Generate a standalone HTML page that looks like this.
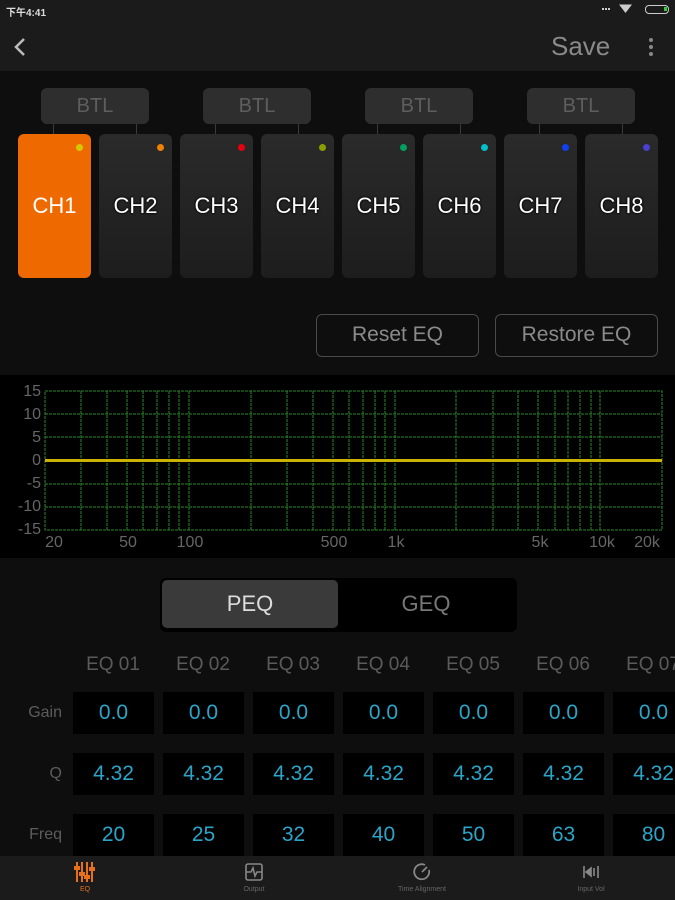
<!DOCTYPE html>
<html><head><meta charset="utf-8"><style>
*{margin:0;padding:0;box-sizing:border-box}
body{width:675px;height:900px;background:#0e0e0e;font-family:"Liberation Sans","Noto Sans CJK SC",sans-serif;position:relative;overflow:hidden;color:#fff}
.a{position:absolute}
.hdr{left:0;top:0;width:675px;height:71px;background:#1b1b1b}
.btl{width:108px;height:36px;background:#2e2e2e;border-radius:6px;color:#5e5e5e;font-size:20px;text-align:center;line-height:36px}
.con{width:1px;height:10px;background:#3a3a3a}
.ch{width:73px;height:144px;border-radius:6px;background:linear-gradient(#2a2a2a,#1d1d1d);font-size:22px;text-align:center;line-height:144px;color:#fff;text-shadow:0 0 2px #000,0 0 2px #000}
.dot{width:7px;height:7px;border-radius:50%;top:10px;right:8px}
.btn{height:43px;width:163px;border:1.5px solid #4a4a4a;border-radius:6px;color:#8a8a8a;font-size:21px;text-align:center;line-height:40px}
.eqh{width:80px;text-align:center;color:#5a5a5a;font-size:19px}
.cell{width:81px;height:42px;background:#000;color:#2aa5c8;font-size:21px;text-align:center;line-height:42px}
.lbl{width:62px;text-align:right;color:#5c5c5c;font-size:16px}
.nav{left:0;top:856px;width:675px;height:44px;background:#1b1b1b}
.nl{font-size:7px;color:#666;text-align:center;width:100px}
</style></head><body>
<div class="a hdr"></div>
<div class="a" style="left:6px;top:4px;font-size:10px;color:#ddd;font-weight:bold">下午4:41</div>
<div class="a" style="left:602px;top:8px;width:8px;height:3px;border-top:2px dotted #ccc"></div>
<div class="a" style="left:619px;top:3px;width:13px;height:10px;background:#ccc;clip-path:polygon(0 15%,100% 15%,50% 100%)"></div>
<div class="a" style="left:645px;top:5px;width:24px;height:9px;border:1.5px solid #ccc;border-radius:4px"><div style="position:absolute;right:1px;top:1px;width:3px;height:4px;background:#3c3"></div></div>
<svg class="a" style="left:12px;top:36px" width="16" height="22"><path d="M12 3 L4 11 L12 19" stroke="#bbb" stroke-width="2.5" fill="none"/></svg>
<div class="a" style="left:551px;top:31px;font-size:26px;color:#8a8a8a">Save</div>
<div class="a" style="left:649px;top:38px;width:4px;height:4px;border-radius:50%;background:#888;box-shadow:0 7px #888,0 14px #888"></div>

<div class="a btl" style="left:41px;top:88px">BTL</div>
<div class="a btl" style="left:203px;top:88px">BTL</div>
<div class="a btl" style="left:365px;top:88px">BTL</div>
<div class="a btl" style="left:527px;top:88px">BTL</div>
<div class="a con" style="left:53px;top:124px"></div><div class="a con" style="left:136px;top:124px"></div>
<div class="a con" style="left:215px;top:124px"></div><div class="a con" style="left:298px;top:124px"></div>
<div class="a con" style="left:377px;top:124px"></div><div class="a con" style="left:460px;top:124px"></div>
<div class="a con" style="left:539px;top:124px"></div><div class="a con" style="left:622px;top:124px"></div>

<div class="a ch" style="left:18px;top:134px;background:#ee6a00;text-shadow:none">CH1<div class="a dot" style="background:#d4c800"></div></div>
<div class="a ch" style="left:99px;top:134px">CH2<div class="a dot" style="background:#f08000"></div></div>
<div class="a ch" style="left:180px;top:134px">CH3<div class="a dot" style="background:#e80010"></div></div>
<div class="a ch" style="left:261px;top:134px">CH4<div class="a dot" style="background:#8aa000"></div></div>
<div class="a ch" style="left:342px;top:134px">CH5<div class="a dot" style="background:#00a060"></div></div>
<div class="a ch" style="left:423px;top:134px">CH6<div class="a dot" style="background:#00c0c8"></div></div>
<div class="a ch" style="left:504px;top:134px">CH7<div class="a dot" style="background:#1040f0"></div></div>
<div class="a ch" style="left:585px;top:134px">CH8<div class="a dot" style="background:#4a40d0"></div></div>

<div class="a btn" style="left:316px;top:314px">Reset EQ</div>
<div class="a btn" style="left:495px;top:314px">Restore EQ</div>

<svg class="a" style="left:0;top:375px" width="675" height="183">
<rect width="675" height="183" fill="#000"/>
<g transform="translate(0,-375)" stroke="#2a8a2a" stroke-width="1" stroke-dasharray="3,1">
<rect x="45" y="391" width="617" height="139" fill="none"/>
<line x1="45" x2="662" y1="414" y2="414"/><line x1="45" x2="662" y1="437" y2="437"/><line x1="45" x2="662" y1="484" y2="484"/><line x1="45" x2="662" y1="507" y2="507"/>
<line x1="81" x2="81" y1="391" y2="530"/><line x1="107" x2="107" y1="391" y2="530"/><line x1="127" x2="127" y1="391" y2="530"/><line x1="143" x2="143" y1="391" y2="530"/><line x1="157" x2="157" y1="391" y2="530"/><line x1="169" x2="169" y1="391" y2="530"/><line x1="179" x2="179" y1="391" y2="530"/><line x1="189" x2="189" y1="391" y2="530"/>
<line x1="251" x2="251" y1="391" y2="530"/><line x1="287" x2="287" y1="391" y2="530"/><line x1="313" x2="313" y1="391" y2="530"/><line x1="333" x2="333" y1="391" y2="530"/><line x1="349" x2="349" y1="391" y2="530"/><line x1="363" x2="363" y1="391" y2="530"/><line x1="375" x2="375" y1="391" y2="530"/><line x1="385" x2="385" y1="391" y2="530"/><line x1="395" x2="395" y1="391" y2="530"/>
<line x1="456" x2="456" y1="391" y2="530"/><line x1="493" x2="493" y1="391" y2="530"/><line x1="518" x2="518" y1="391" y2="530"/><line x1="538" x2="538" y1="391" y2="530"/><line x1="555" x2="555" y1="391" y2="530"/><line x1="568" x2="568" y1="391" y2="530"/><line x1="580" x2="580" y1="391" y2="530"/><line x1="591" x2="591" y1="391" y2="530"/><line x1="600" x2="600" y1="391" y2="530"/>
</g>
<rect x="45" y="84" width="617" height="3" fill="#c8b400"/>
<g fill="#666" font-size="16" font-family="Liberation Sans" text-anchor="end">
<text x="41" y="21">15</text><text x="41" y="44">10</text><text x="41" y="67">5</text><text x="41" y="90">0</text><text x="41" y="113">-5</text><text x="41" y="136">-10</text><text x="41" y="159">-15</text>
</g>
<g fill="#666" font-size="16" font-family="Liberation Sans" text-anchor="middle">
<text x="54" y="172">20</text><text x="128" y="172">50</text><text x="190" y="172">100</text><text x="334" y="172">500</text><text x="396" y="172">1k</text><text x="540" y="172">5k</text><text x="602" y="172">10k</text><text x="647" y="172">20k</text>
</g>
</svg>

<div class="a" style="left:160px;top:578px;width:357px;height:54px;background:#000;border-radius:6px"></div>
<div class="a" style="left:162px;top:580px;width:176px;height:48px;background:#3a3a3a;border-radius:5px;text-align:center;line-height:48px;font-size:22px;color:#ddd">PEQ</div>
<div class="a" style="left:338px;top:580px;width:176px;height:48px;text-align:center;line-height:48px;font-size:22px;color:#777">GEQ</div>

<div class="a lbl" style="left:0;top:704px">Gain</div>
<div class="a lbl" style="left:0;top:765px">Q</div>
<div class="a lbl" style="left:0;top:826px">Freq</div>

<div class="a eqh" style="left:73px;top:654px">EQ 01</div><div class="a eqh" style="left:163px;top:654px">EQ 02</div><div class="a eqh" style="left:253px;top:654px">EQ 03</div><div class="a eqh" style="left:343px;top:654px">EQ 04</div><div class="a eqh" style="left:433px;top:654px">EQ 05</div><div class="a eqh" style="left:523px;top:654px">EQ 06</div><div class="a eqh" style="left:613px;top:654px">EQ 07</div>

<div class="a cell" style="left:73px;top:692px">0.0</div><div class="a cell" style="left:163px;top:692px">0.0</div><div class="a cell" style="left:253px;top:692px">0.0</div><div class="a cell" style="left:343px;top:692px">0.0</div><div class="a cell" style="left:433px;top:692px">0.0</div><div class="a cell" style="left:523px;top:692px">0.0</div><div class="a cell" style="left:613px;top:692px">0.0</div>
<div class="a cell" style="left:73px;top:753px">4.32</div><div class="a cell" style="left:163px;top:753px">4.32</div><div class="a cell" style="left:253px;top:753px">4.32</div><div class="a cell" style="left:343px;top:753px">4.32</div><div class="a cell" style="left:433px;top:753px">4.32</div><div class="a cell" style="left:523px;top:753px">4.32</div><div class="a cell" style="left:613px;top:753px">4.32</div>
<div class="a cell" style="left:73px;top:814px">20</div><div class="a cell" style="left:163px;top:814px">25</div><div class="a cell" style="left:253px;top:814px">32</div><div class="a cell" style="left:343px;top:814px">40</div><div class="a cell" style="left:433px;top:814px">50</div><div class="a cell" style="left:523px;top:814px">63</div><div class="a cell" style="left:613px;top:814px">80</div>

<div class="a nav"></div>
<svg class="a" style="left:74px;top:861px" width="22" height="22" stroke="#e8701a" stroke-width="2" fill="#e8701a">
<line x1="3" y1="1" x2="3" y2="21"/><line x1="8" y1="1" x2="8" y2="21"/><line x1="13" y1="1" x2="13" y2="21"/><line x1="18" y1="1" x2="18" y2="21"/>
<rect x="1" y="6" width="4" height="2"/><rect x="6" y="12" width="4" height="2"/><rect x="11" y="15" width="4" height="2"/><rect x="16" y="7" width="4" height="2"/>
</svg>
<div class="a nl" style="left:35px;top:886px;color:#e8701a">EQ</div>
<svg class="a" style="left:244px;top:862px" width="20" height="20" fill="none" stroke="#888" stroke-width="1.6"><rect x="2" y="2" width="16" height="16" rx="2"/><path d="M2 10 H7 L9 6 L11 14 L13 10 H18"/></svg>
<div class="a nl" style="left:204px;top:886px">Output</div>
<svg class="a" style="left:412px;top:862px" width="20" height="20" fill="none" stroke="#888" stroke-width="1.8"><path d="M13 3 A7.5 7.5 0 1 0 17 8"/><path d="M10 10 L15 5"/></svg>
<div class="a nl" style="left:372px;top:886px">Time Alignment</div>
<svg class="a" style="left:581px;top:862px" width="20" height="20" fill="none" stroke="#888" stroke-width="1.6"><line x1="3" y1="4" x2="3" y2="16"/><line x1="17" y1="4" x2="17" y2="16"/><path d="M5 10 L10 6 V14 Z" fill="#888"/><line x1="13" y1="6" x2="13" y2="14"/></svg>
<div class="a nl" style="left:541px;top:886px">Input Vol</div>
</body></html>
